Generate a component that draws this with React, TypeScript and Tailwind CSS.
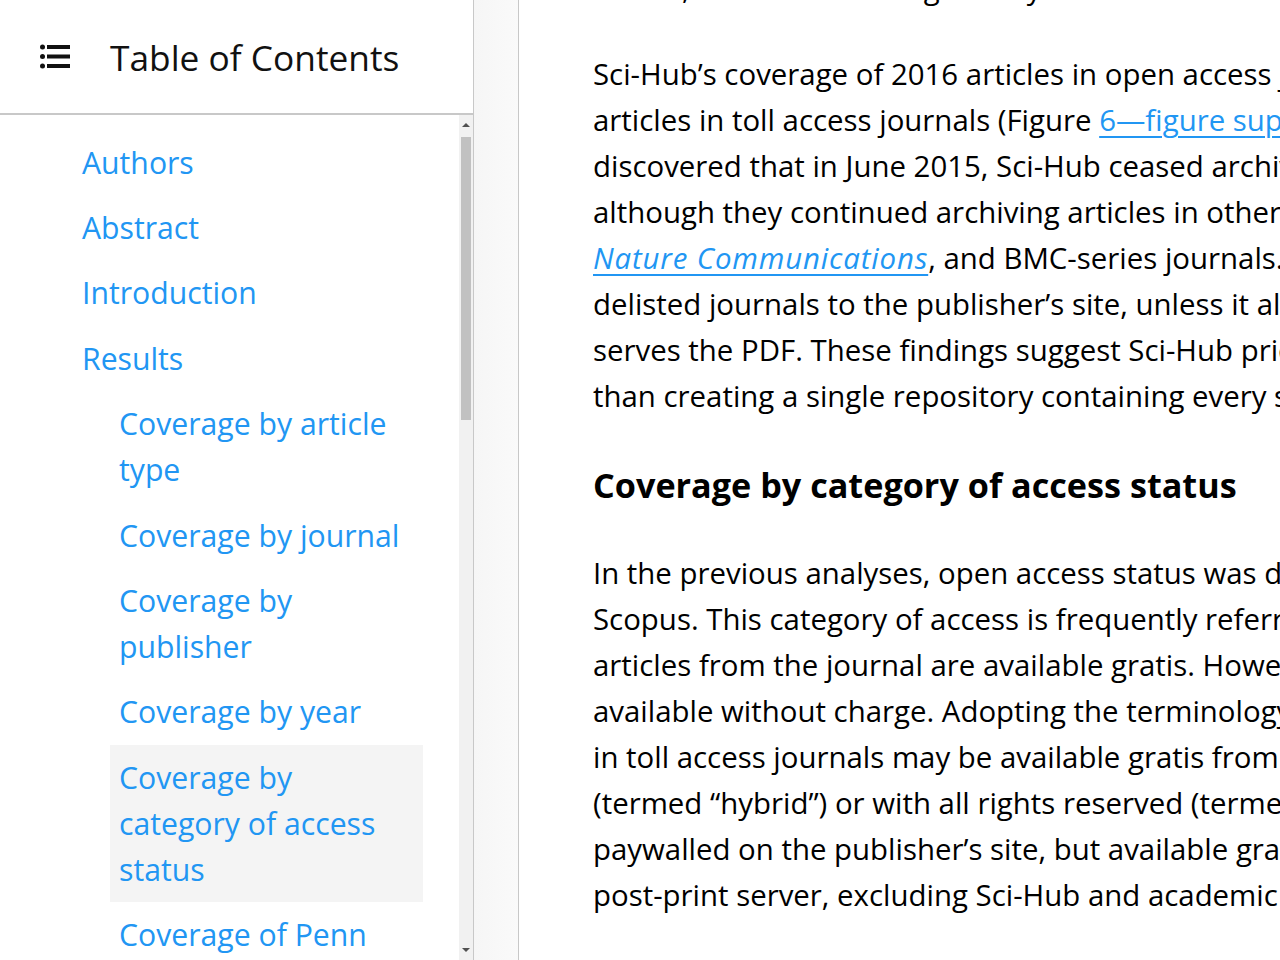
import React from "react";

const toc: { label: string[]; level: number; active?: boolean }[] = [
  { label: ["Authors"], level: 1 },
  { label: ["Abstract"], level: 1 },
  { label: ["Introduction"], level: 1 },
  { label: ["Results"], level: 1 },
  { label: ["Coverage by article", "type"], level: 2 },
  { label: ["Coverage by journal"], level: 2 },
  { label: ["Coverage by", "publisher"], level: 2 },
  { label: ["Coverage by year"], level: 2 },
  { label: ["Coverage by", "category of access", "status"], level: 2, active: true },
  { label: ["Coverage of Penn", "State"], level: 2 },
];

function ListIcon() {
  return (
    <svg width="32" height="28" viewBox="0 0 32 28" className="block">
      <circle cx="3.5" cy="4" r="2.5" fill="#111" />
      <circle cx="3.5" cy="13.5" r="2.5" fill="#111" />
      <circle cx="3.5" cy="23" r="2.5" fill="#111" />
      <rect x="8" y="2" width="23" height="4" fill="#111" />
      <rect x="8" y="11.5" width="23" height="4" fill="#111" />
      <rect x="8" y="21" width="23" height="4" fill="#111" />
    </svg>
  );
}

const L = "text-[#2196f3] underline decoration-[1.5px] underline-offset-[5px]";

export default function App() {
  return (
    <div
      className="flex h-[960px] w-[1280px] overflow-hidden bg-white text-[#111]"
      style={{ fontFamily: '"Open Sans", "Noto Sans", sans-serif' }}
    >
      <aside className="flex w-[474px] shrink-0 flex-col border-r border-[#c8c8c8]">
        <header className="flex h-[115px] shrink-0 items-center border-b-2 border-[#c8c8c8] pl-[39px]">
          <ListIcon />
          <h1 className="ml-[39px] mt-[1px] text-[35.3px] font-medium text-[#111]">Table of Contents</h1>
        </header>
        <div className="flex min-h-0 flex-1">
          <nav className="flex-1 overflow-hidden pl-[72px] pr-[36px] pt-[15px]">
            {toc.map((item, i) => (
              <div
                key={i}
                className={`${item.level === 2 ? "ml-[38px] pl-[9px]" : "pl-[10px]"} ${item.active ? "bg-[#f4f4f4]" : ""} whitespace-nowrap py-[9.7px] text-[30.2px] font-medium leading-[46px] text-[#2196f3]`}
              >
                {item.label.map((l, j) => (
                  <div key={j}>{l}</div>
                ))}
              </div>
            ))}
          </nav>
          <div className="flex w-[14px] shrink-0 flex-col bg-[#f1f1f1] pb-[2px] pt-[2px]">
            <div className="flex h-[16px] items-center justify-center">
              <div className="h-0 w-0 border-x-[4px] border-b-[4px] border-x-transparent border-b-[#505050]" />
            </div>
            <div className="mx-[2px] mt-[4px] h-[283px] bg-[#c1c1c1]" />
            <div className="flex-1" />
            <div className="flex h-[16px] items-center justify-center">
              <div className="h-0 w-0 border-x-[4px] border-t-[4px] border-x-transparent border-t-[#505050]" />
            </div>
          </div>
        </div>
      </aside>
      <div className="w-[45px] shrink-0 border-r border-[#c8c8c8] bg-gradient-to-r from-[#f6f6f6] to-[#fafafa]" />
      <main className="min-w-0 flex-1 overflow-hidden pl-[74px]">
        <div className="-mt-[35px] whitespace-nowrap text-[29.4px] leading-[46px] text-[#000]">
          <p>access, and thus less targeted by Sci-Hub.</p>
          <div className="mt-[40px]">
            <div>Sci-Hub’s coverage of 2016 articles in open access journals was lower than for</div>
            <div>
              articles in toll access journals (Figure <a className={L}>6—figure supplement 1</a>). We
            </div>
            <div>discovered that in June 2015, Sci-Hub ceased archiving articles in PLOS journals,</div>
            <div>although they continued archiving articles in other open access journals such as eLife,</div>
            <div>
              <a className={`${L} italic tracking-[0.85px]`}>Nature Communications</a>, and BMC-series journals. Sci-Hub redirects
            </div>
            <div>delisted journals to the publisher’s site, unless it already has the article and</div>
            <div>serves the PDF. These findings suggest Sci-Hub prioritizes providing access rather</div>
            <div>than creating a single repository containing every scholarly article.</div>
          </div>
          <h2 className="mt-[43px] text-[34.2px] font-bold leading-[46px]">
            Coverage by category of access status
          </h2>
          <div className="mt-[42px]">
            <div>In the previous analyses, open access status was determined at the journal level by</div>
            <div>Scopus. This category of access is frequently referred to as gold open access, where all</div>
            <div>articles from the journal are available gratis. However, articles in toll access journals may be</div>
            <div>available without charge. Adopting the terminology of Piwowar et al., articles</div>
            <div>in toll access journals may be available gratis from the publisher under an open license</div>
            <div>(termed “hybrid”) or with all rights reserved (termed “bronze”). Articles may also be</div>
            <div>paywalled on the publisher’s site, but available gratis from a repository or pre-print or</div>
            <div>post-print server, excluding Sci-Hub and academic social networks (termed “green”).</div>
          </div>
        </div>
      </main>
    </div>
  );
}
